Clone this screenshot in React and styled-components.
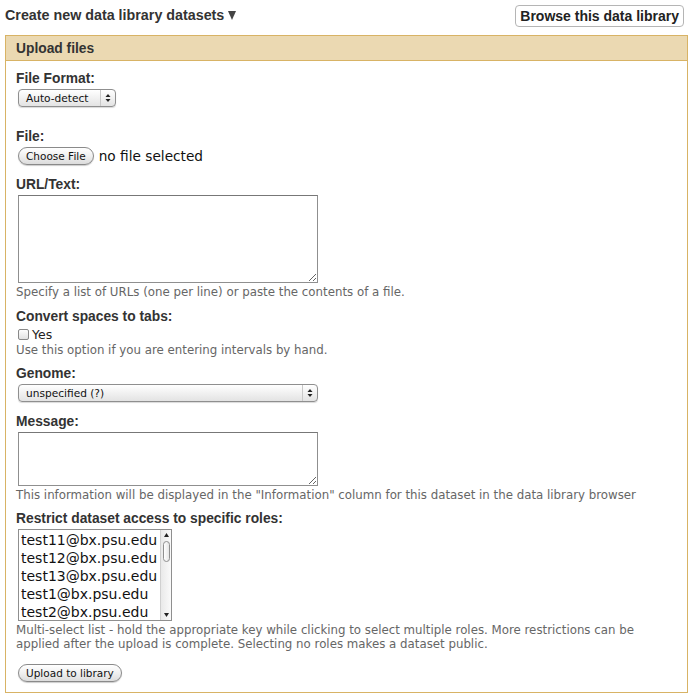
import React from 'react';
import styled, { createGlobalStyle } from 'styled-components';

const GlobalStyle = createGlobalStyle`
  body {
    margin: 0;
    background: #fff;
    font-family: "DejaVu Sans", Verdana, sans-serif;
    color: #303030;
  }
`;

const Page = styled.div`
  padding: 0 5px;
`;

const TopBar = styled.div`
  display: flex;
  justify-content: space-between;
  align-items: center;
  height: 30px;
  padding-right: 4px;
`;

const Title = styled.div`
  display: flex;
  align-items: center;
  gap: 4px;
  font-family: "Liberation Sans", Arial, sans-serif;
  font-weight: bold;
  font-size: 14.3px;
  color: #333;
`;

const BrowseButton = styled.button`
  font-family: "Liberation Sans", Arial, sans-serif;
  font-weight: bold;
  font-size: 14px;
  color: #222;
  background: #fff;
  border: 1px solid #b5b5b5;
  border-radius: 4px;
  height: 22px;
  padding: 0 4px;
  margin-top: 2px;
`;

const Panel = styled.div`
  margin-top: 5px;
  border: 1px solid #d8b365;
`;

const PanelHeader = styled.div`
  background: #ebd9b2;
  border-bottom: 1px solid #d8b365;
  height: 24px;
  display: flex;
  align-items: center;
  padding-left: 10px;
  font-family: "Liberation Sans", Arial, sans-serif;
  font-weight: bold;
  font-size: 13.8px;
  color: #333;
`;

const PanelBody = styled.div`
  padding: 10px;
`;

const Row = styled.div`
  margin-bottom: ${p => p.$space || 10}px;
`;

const Label = styled.div`
  font-family: "Liberation Sans", Arial, sans-serif;
  font-weight: bold;
  font-size: 13.8px;
  line-height: 16px;
  margin-bottom: 2px;
  color: #333;
`;

const Help = styled.div`
  font-size: 11.8px;
  line-height: 14px;
  color: #666;
  margin-top: 2px;
  padding-right: 18px;
`;

const SelectBox = styled.div`
  display: flex;
  align-items: center;
  width: ${p => p.$width}px;
  height: 18px;
  margin-left: 2px;
  box-sizing: border-box;
  border: 1px solid #8f8f8f;
  border-radius: 4px;
  background: linear-gradient(#ffffff, #f1f1f1 50%, #e3e3e3);
  box-shadow: 0 1px 1px rgba(0, 0, 0, 0.15);
  font-size: 10.6px;
  color: #111;
`;

const SelectText = styled.span`
  flex: 1;
  padding-left: ${p => p.$pad || 7}px;
`;

const SelectArrows = styled.span`
  width: 14px;
  height: 100%;
  border-left: 1px solid #c8c8c8;
  display: flex;
  align-items: center;
  justify-content: center;
`;

const PillButton = styled.button`
  height: 18px;
  margin-left: 2px;
  padding: 0 7px;
  border: 1px solid #8a8a8a;
  border-radius: 9px;
  background: linear-gradient(#ffffff, #f0f0f0 50%, #dcdcdc);
  box-shadow: 0 1px 1px rgba(0, 0, 0, 0.2);
  font-family: "DejaVu Sans", Verdana, sans-serif;
  font-size: 10.5px;
  color: #111;
  line-height: 16px;
`;

const FileRow = styled.div`
  display: flex;
  align-items: center;
  gap: 5px;
  height: 18px;
`;

const FileText = styled.span`
  font-size: 13.7px;
  color: #111;
`;

const TextArea = styled.textarea`
  display: block;
  margin-left: 2px;
  width: 300px;
  height: ${p => p.$height}px;
  box-sizing: border-box;
  border: 1px solid #8f8f8f;
  border-top-color: #777;
  background: #fff;
  padding: 2px;
  font-size: 12px;
`;

const CheckRow = styled.label`
  display: flex;
  align-items: center;
  gap: 3px;
  height: 14px;
  margin-left: 2px;
  font-size: 12.5px;
  color: #222;
`;

const CheckBox = styled.span`
  width: 11px;
  height: 11px;
  box-sizing: border-box;
  border: 1px solid #888;
  border-radius: 2px;
  background: linear-gradient(#fdfdfd, #e2e2e2);
`;

const ListBox = styled.div`
  display: flex;
  margin-left: 2px;
  width: 154px;
  height: 92px;
  box-sizing: border-box;
  border: 1px solid #8f8f8f;
  background: #fff;
  overflow: hidden;
`;

const ListItems = styled.div`
  flex: 1;
  padding-top: 1px;
  padding-left: 2px;
`;

const ListItem = styled.div`
  font-size: 14px;
  line-height: 18px;
  color: #111;
  white-space: nowrap;
`;

const ScrollTrack = styled.div`
  width: 10px;
  display: flex;
  flex-direction: column;
  align-items: center;
  background: linear-gradient(90deg, #e9e9e9, #fafafa);
  border-left: 1px solid #d0d0d0;
`;

const ScrollArrow = styled.div`
  height: 10px;
  display: flex;
  align-items: center;
  justify-content: center;
`;

const ScrollThumb = styled.div`
  width: 7px;
  height: 21px;
  margin-top: 1px;
  border: 1px solid #8f8f8f;
  box-sizing: border-box;
  border-radius: 4px;
  background: linear-gradient(90deg, #fff, #e5e5e5);
`;

const ScrollSpacer = styled.div`
  flex: 1;
`;

const Caret = () => (
  <svg width="8" height="10" viewBox="0 0 8 10">
    <path d="M0 1 L8 1 L4 10 Z" fill="#444" />
  </svg>
);

const Arrows = () => (
  <svg width="6" height="10" viewBox="0 0 6 10">
    <path d="M3 1 L5.5 4 L0.5 4 Z" fill="#222" />
    <path d="M3 9 L5.5 6 L0.5 6 Z" fill="#222" />
  </svg>
);

const Tri = ({ up }) => (
  <svg width="5" height="4" viewBox="0 0 5 4">
    <path d={up ? 'M2.5 0 L5 4 L0 4 Z' : 'M2.5 4 L5 0 L0 0 Z'} fill="#222" />
  </svg>
);

const roles = [
  'test11@bx.psu.edu',
  'test12@bx.psu.edu',
  'test13@bx.psu.edu',
  'test1@bx.psu.edu',
  'test2@bx.psu.edu',
];

export default function App() {
  return (
    <Page>
      <GlobalStyle />
      <TopBar>
        <Title>
          Create new data library datasets
          <Caret />
        </Title>
        <BrowseButton>Browse this data library</BrowseButton>
      </TopBar>
      <Panel>
        <PanelHeader>Upload files</PanelHeader>
        <PanelBody>
          <Row $space={22}>
            <Label>File Format:</Label>
            <SelectBox $width={98}>
              <SelectText>Auto-detect</SelectText>
              <SelectArrows><Arrows /></SelectArrows>
            </SelectBox>
          </Row>
          <Row $space={12}>
            <Label>File:</Label>
            <FileRow>
              <PillButton>Choose File</PillButton>
              <FileText>no file selected</FileText>
            </FileRow>
          </Row>
          <Row $space={10}>
            <Label>URL/Text:</Label>
            <TextArea $height={88} />
            <Help>Specify a list of URLs (one per line) or paste the contents of a file.</Help>
          </Row>
          <Row $space={9}>
            <Label>Convert spaces to tabs:</Label>
            <CheckRow>
              <CheckBox />
              Yes
            </CheckRow>
            <Help>Use this option if you are entering intervals by hand.</Help>
          </Row>
          <Row $space={12}>
            <Label>Genome:</Label>
            <SelectBox $width={300}>
              <SelectText>unspecified (?)</SelectText>
              <SelectArrows><Arrows /></SelectArrows>
            </SelectBox>
          </Row>
          <Row $space={9}>
            <Label>Message:</Label>
            <TextArea $height={54} />
            <Help>This information will be displayed in the "Information" column for this dataset in the data library browser</Help>
          </Row>
          <Row $space={11}>
            <Label>Restrict dataset access to specific roles:</Label>
            <ListBox>
              <ListItems>
                {roles.map(r => (
                  <ListItem key={r}>{r}</ListItem>
                ))}
              </ListItems>
              <ScrollTrack>
                <ScrollArrow><Tri up /></ScrollArrow>
                <ScrollThumb />
                <ScrollSpacer />
                <ScrollArrow><Tri /></ScrollArrow>
              </ScrollTrack>
            </ListBox>
            <Help>
              Multi-select list - hold the appropriate key while clicking to select multiple roles. More restrictions can be applied after the upload is complete. Selecting no roles makes a dataset public.
            </Help>
          </Row>
          <PillButton>Upload to library</PillButton>
        </PanelBody>
      </Panel>
    </Page>
  );
}
